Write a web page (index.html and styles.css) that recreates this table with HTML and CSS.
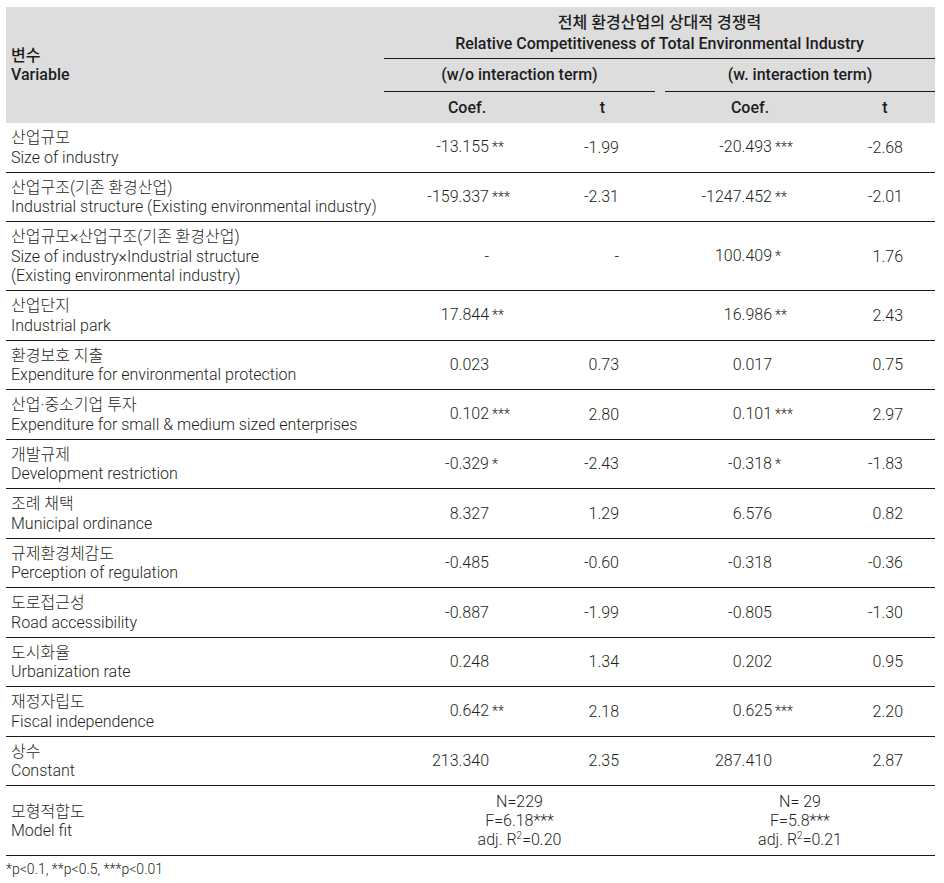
FILE: index.html
```html
<!DOCTYPE html>
<html lang="ko">
<head>
<meta charset="utf-8">
<title>Relative Competitiveness of Total Environmental Industry</title>
<link rel="stylesheet" href="styles.css">
</head>
<body>
<div class="wrap">
<table class="tbl">
  <colgroup>
    <col class="c-var"><col class="c-coef1"><col class="c-t1"><col class="c-gap"><col class="c-coef2"><col class="c-t2">
  </colgroup>
  <thead>
    <tr class="h1">
      <th class="hvar" rowspan="3">변수<br>Variable</th>
      <th class="htitle" colspan="5">전체 환경산업의 상대적 경쟁력<br>Relative Competitiveness of Total Environmental Industry</th>
    </tr>
    <tr class="h2">
      <th class="hsub" colspan="2">(w/o interaction term)</th>
      <th class="hgap"></th>
      <th class="hsub" colspan="2">(w. interaction term)</th>
    </tr>
    <tr class="h3">
      <th class="hc">Coef.</th>
      <th class="hc">t</th>
      <th class="hgap"></th>
      <th class="hc">Coef.</th>
      <th class="hc">t</th>
    </tr>
  </thead>
  <tbody>
    <tr>
      <td class="var">산업규모<br>Size of industry</td>
      <td class="coef1"><span class="num">-13.155</span><span class="st">**</span></td>
      <td class="t1">-1.99</td><td></td>
      <td class="coef2"><span class="num">-20.493</span><span class="st">***</span></td>
      <td class="t2">-2.68</td>
    </tr>
    <tr>
      <td class="var">산업구조(기존 환경산업)<br>Industrial structure (Existing environmental industry)</td>
      <td class="coef1"><span class="num">-159.337</span><span class="st">***</span></td>
      <td class="t1">-2.31</td><td></td>
      <td class="coef2"><span class="num">-1247.452</span><span class="st">**</span></td>
      <td class="t2">-2.01</td>
    </tr>
    <tr>
      <td class="var">산업규모×산업구조(기존 환경산업)<br>Size of industry×Industrial structure<br>(Existing environmental industry)</td>
      <td class="coef1"><span class="num">-</span><span class="st"></span></td>
      <td class="t1">-</td><td></td>
      <td class="coef2"><span class="num">100.409</span><span class="st">*</span></td>
      <td class="t2">1.76</td>
    </tr>
    <tr>
      <td class="var">산업단지<br>Industrial park</td>
      <td class="coef1"><span class="num">17.844</span><span class="st">**</span></td>
      <td class="t1"></td><td></td>
      <td class="coef2"><span class="num">16.986</span><span class="st">**</span></td>
      <td class="t2">2.43</td>
    </tr>
    <tr>
      <td class="var">환경보호 지출<br>Expenditure for environmental protection</td>
      <td class="coef1"><span class="num">0.023</span><span class="st"></span></td>
      <td class="t1">0.73</td><td></td>
      <td class="coef2"><span class="num">0.017</span><span class="st"></span></td>
      <td class="t2">0.75</td>
    </tr>
    <tr>
      <td class="var">산업·중소기업 투자<br>Expenditure for small &amp; medium sized enterprises</td>
      <td class="coef1"><span class="num">0.102</span><span class="st">***</span></td>
      <td class="t1">2.80</td><td></td>
      <td class="coef2"><span class="num">0.101</span><span class="st">***</span></td>
      <td class="t2">2.97</td>
    </tr>
    <tr>
      <td class="var">개발규제<br>Development restriction</td>
      <td class="coef1"><span class="num">-0.329</span><span class="st">*</span></td>
      <td class="t1">-2.43</td><td></td>
      <td class="coef2"><span class="num">-0.318</span><span class="st">*</span></td>
      <td class="t2">-1.83</td>
    </tr>
    <tr>
      <td class="var">조례 채택<br>Municipal ordinance</td>
      <td class="coef1"><span class="num">8.327</span><span class="st"></span></td>
      <td class="t1">1.29</td><td></td>
      <td class="coef2"><span class="num">6.576</span><span class="st"></span></td>
      <td class="t2">0.82</td>
    </tr>
    <tr>
      <td class="var">규제환경체감도<br>Perception of regulation</td>
      <td class="coef1"><span class="num">-0.485</span><span class="st"></span></td>
      <td class="t1">-0.60</td><td></td>
      <td class="coef2"><span class="num">-0.318</span><span class="st"></span></td>
      <td class="t2">-0.36</td>
    </tr>
    <tr>
      <td class="var">도로접근성<br>Road accessibility</td>
      <td class="coef1"><span class="num">-0.887</span><span class="st"></span></td>
      <td class="t1">-1.99</td><td></td>
      <td class="coef2"><span class="num">-0.805</span><span class="st"></span></td>
      <td class="t2">-1.30</td>
    </tr>
    <tr>
      <td class="var">도시화율<br>Urbanization rate</td>
      <td class="coef1"><span class="num">0.248</span><span class="st"></span></td>
      <td class="t1">1.34</td><td></td>
      <td class="coef2"><span class="num">0.202</span><span class="st"></span></td>
      <td class="t2">0.95</td>
    </tr>
    <tr>
      <td class="var">재정자립도<br>Fiscal independence</td>
      <td class="coef1"><span class="num">0.642</span><span class="st">**</span></td>
      <td class="t1">2.18</td><td></td>
      <td class="coef2"><span class="num">0.625</span><span class="st">***</span></td>
      <td class="t2">2.20</td>
    </tr>
    <tr>
      <td class="var">상수<br>Constant</td>
      <td class="coef1"><span class="num">213.340</span><span class="st"></span></td>
      <td class="t1">2.35</td><td></td>
      <td class="coef2"><span class="num">287.410</span><span class="st"></span></td>
      <td class="t2">2.87</td>
    </tr>
    <tr class="fit">
      <td class="var">모형적합도<br>Model fit</td>
      <td class="fitval" colspan="2">N=229<br>F=6.18***<br>adj. R<sup>2</sup>=0.20</td>
      <td></td>
      <td class="fitval" colspan="2">N= 29<br>F=5.8***<br>adj. R<sup>2</sup>=0.21</td>
    </tr>
  </tbody>
</table>
<p class="note">*p&lt;0.1, **p&lt;0.5, ***p&lt;0.01</p>
</div>
</body>
</html>
```

FILE: styles.css
```css
* { box-sizing: border-box; }
html, body { margin: 0; padding: 0; background: #ffffff; }
body {
  font-family: Roboto, "Noto Sans CJK KR", sans-serif;
  font-weight: 300;
  color: #231f20;
}
.wrap { padding: 7px 0 0 6px; }
.tbl {
  border-collapse: collapse;
  table-layout: fixed;
  width: 929px;
  font-size: 16px;
}
.c-var { width: 378px; }
.c-coef1 { width: 166px; }
.c-t1 { width: 105px; }
.c-gap { width: 10px; }
.c-coef2 { width: 170px; }
.c-t2 { width: 100px; }

thead th {
  background: #dddddd;
  font-weight: 500;
  padding: 0;
  color: #1d1d1d;
}
.hvar {
  text-align: left;
  padding: 0 5px;
  line-height: 19.5px;
  vertical-align: middle;
}
.h1 { height: 51px; }
.htitle {
  line-height: 21px;
  border-bottom: 1px solid #1a1a1a;
  text-align: center;
  padding-top: 2px !important;
}
.h2 { height: 33px; }
.h3 { height: 32px; }
.hsub {
  border-bottom: 1px solid #1a1a1a;
  text-align: center;
}
.hc { text-align: center; }
.hgap { border: none; }

tbody td {
  border-bottom: 1px solid #1a1a1a;
  padding: 5px 0 4.5px;
  line-height: 19.5px;
  vertical-align: middle;
}
td.var { padding-left: 5px; padding-right: 0; white-space: nowrap; }
.coef1, .coef2 { white-space: nowrap; }
.num {
  display: inline-block;
  text-align: right;
}
.coef1 .num { width: 105px; }
.coef2 .num { width: 107px; }
.st {
  display: inline-block;
  margin-left: 3px;
  font-size: 14px;
}
.t1 { text-align: right; padding-right: 36px !important; }
.t2 { text-align: right; padding-right: 32px !important; }

.fit td { line-height: 19px; padding-top: 6px; padding-bottom: 6px; }
.fitval { text-align: center; }
.fitval sup { font-size: 10px; line-height: 0; vertical-align: 6px; }

.note {
  margin: 4px 0 0 0;
  font-size: 14px;
  line-height: 18px;
}
```
